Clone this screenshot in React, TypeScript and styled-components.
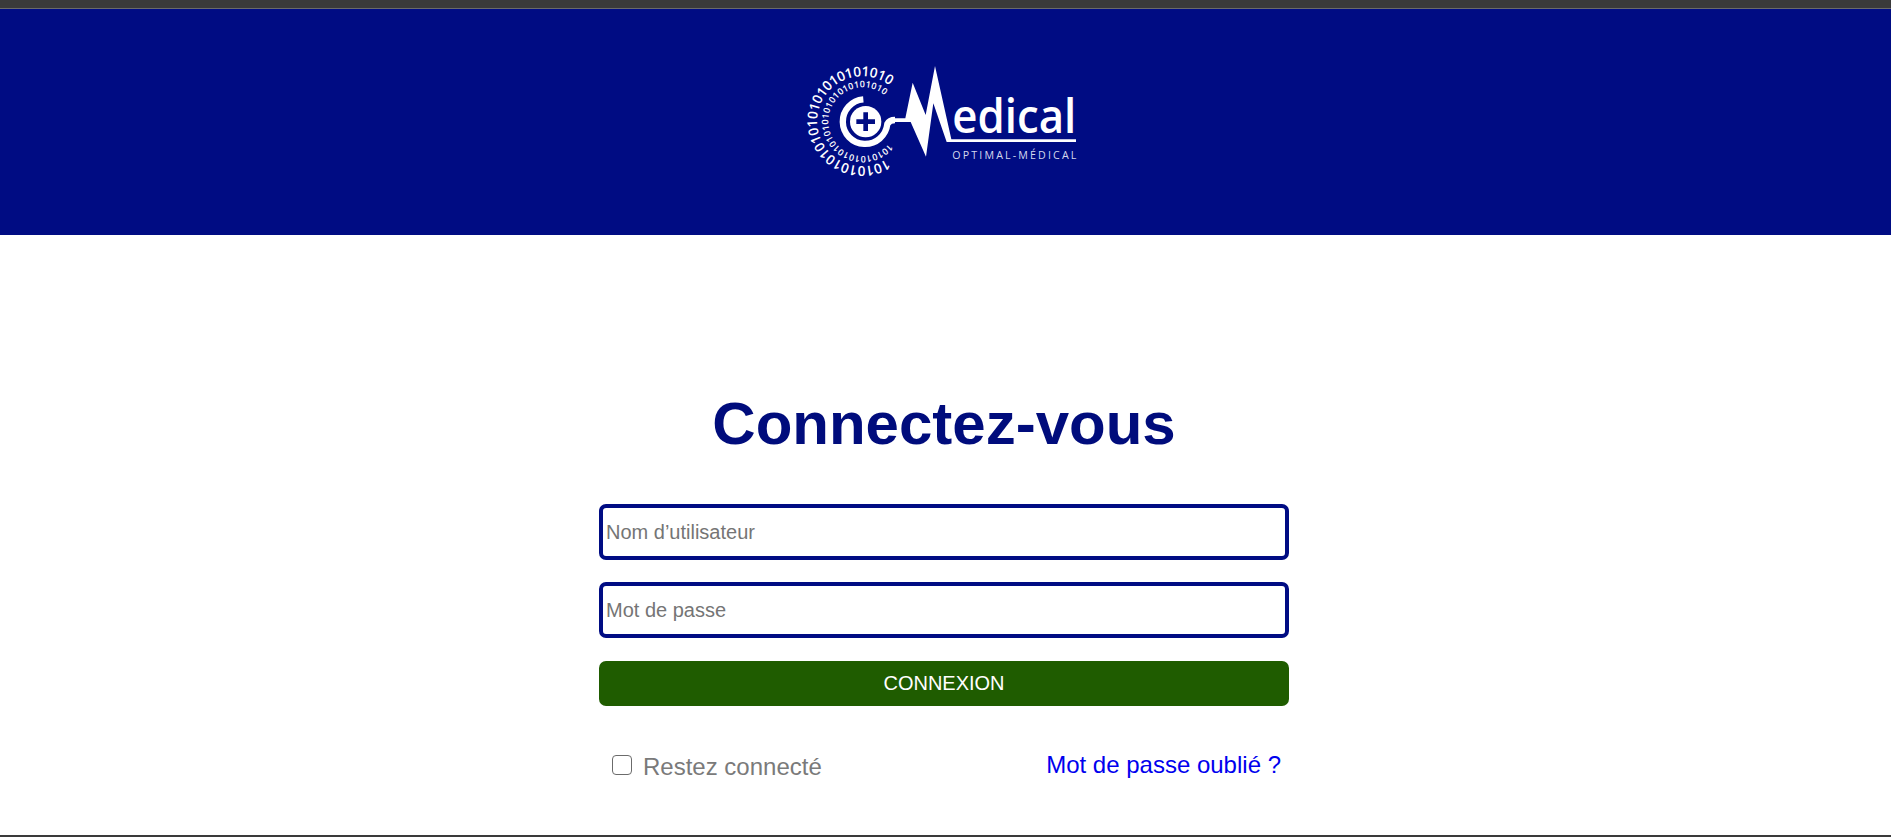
import React from 'react';
import styled, { createGlobalStyle } from 'styled-components';

const Global = createGlobalStyle`
  html, body { margin: 0; padding: 0; background: #fff; }
  body { font-family: "Liberation Sans", Arial, sans-serif; }
`;

const Page = styled.div`
  width: 100%;
  height: 837px;
  display: flex;
  flex-direction: column;
  overflow: hidden;
  background: #fff;
`;

const TopStrip = styled.div`
  height: 8px;
  flex: none;
  background: #3a3a3a;
  border-bottom: 1px solid #6a6a6a;
`;

const Header = styled.header`
  height: 226px;
  flex: none;
  background: #000c83;
  display: flex;
  align-items: center;
  justify-content: center;
`;

const Main = styled.main`
  flex: 1;
  display: flex;
  flex-direction: column;
  align-items: center;
  padding: 152px 3px 0 0;
`;

const Title = styled.h1`
  margin: 0 0 43px;
  font-size: 60px;
  line-height: 74px;
  font-weight: 700;
  color: #000c7c;
`;

const Form = styled.form`
  width: 690px;
  display: flex;
  flex-direction: column;
`;

const Field = styled.input`
  box-sizing: border-box;
  width: 100%;
  height: 56px;
  margin-bottom: 22px;
  padding: 0 3px;
  border: 4px solid #000c83;
  border-radius: 7px;
  outline: none;
  font: 20px "Liberation Sans", Arial, sans-serif;
  &::placeholder { color: #757575; opacity: 1; }

  & + button {
    margin-top: 1px;
  }
`;

const Submit = styled.button`
  height: 45px;
  border: none;
  border-radius: 7px;
  background: #1f5c00;
  color: #fff;
  font: 20px "Liberation Sans", Arial, sans-serif;
  text-transform: uppercase;
`;

const Options = styled.div`
  margin-top: 45px;
  display: flex;
  justify-content: space-between;
  align-items: center;
  padding: 0 8px 0 13px;
`;

const Remember = styled.label`
  display: flex;
  align-items: center;
  gap: 11px;
  font-size: 24px;
  color: #7a7a7a;
`;

const Check = styled.input`
  appearance: none;
  box-sizing: border-box;
  width: 20px;
  height: 20px;
  margin: 0 0 3px;
  background: #fff;
  border: 1.5px solid #6b6b6b;
  border-radius: 4px;
`;

const Forgot = styled.a`
  font-size: 24px;
  margin-bottom: 3px;
  color: #0000ee;
  text-decoration: none;
`;

const BottomLine = styled.div`
  height: 2px;
  flex: none;
  background: #3a3a3a;
`;

const W = '#ffffff';
const N = '#000c83';
const LogoFont = '"Open Sans", sans-serif';

const Logo = () => (
  <svg width="311" height="160" viewBox="30 6 933 480" role="img" aria-label="Medical">
    <defs>
      <path id="outer-ring" d="M320 357 A135 135 0 1 1 329 137" fill="none" />
      <path id="inner-ring" d="M327 311 A103 103 0 1 1 314 166" fill="none" />
    </defs>
    <text fill={W} fontFamily={LogoFont} fontSize="41" fontWeight="600">
      <textPath href="#outer-ring" textLength="590" lengthAdjust="spacing">10101010101010101010101010</textPath>
    </text>
    <text fill={W} fontFamily={LogoFont} fontSize="27" fontWeight="600">
      <textPath href="#inner-ring" textLength="485" lengthAdjust="spacing">101010101010101010101010101010</textPath>
    </text>
    <path d="M250 178 A67 67 0 1 0 322 252 Q328 240 345 240" fill="none" stroke={W} strokeWidth="19" />
    <circle cx="257" cy="245" r="47" fill={W} />
    <path d="M257 217 V273 M229 245 H285" stroke={N} strokeWidth="14" />
    <path d="M335 235 H376 L398 128 L437 225 L465 78 L514 298 H888 V306 H500 L460 190 L438 350 L392 246 H335 Z" fill={W} />
    <text x="517" y="280" fill={W} fontFamily={LogoFont} fontSize="140" fontWeight="600" textLength="372" lengthAdjust="spacingAndGlyphs">edical</text>
    <text x="517" y="358" fill="#d5d8ee" fontFamily={LogoFont} fontSize="32" textLength="372">OPTIMAL-MÉDICAL</text>
  </svg>
);

export default function App() {
  return (
    <Page>
      <Global />
      <TopStrip />
      <Header><Logo /></Header>
      <Main>
        <Title>Connectez-vous</Title>
        <Form onSubmit={(e) => e.preventDefault()}>
          <Field type="text" placeholder="Nom d’utilisateur" />
          <Field type="password" placeholder="Mot de passe" />
          <Submit type="submit">Connexion</Submit>
          <Options>
            <Remember><Check type="checkbox" />Restez connecté</Remember>
            <Forgot href="#">Mot de passe oublié ?</Forgot>
          </Options>
        </Form>
      </Main>
      <BottomLine />
    </Page>
  );
}
